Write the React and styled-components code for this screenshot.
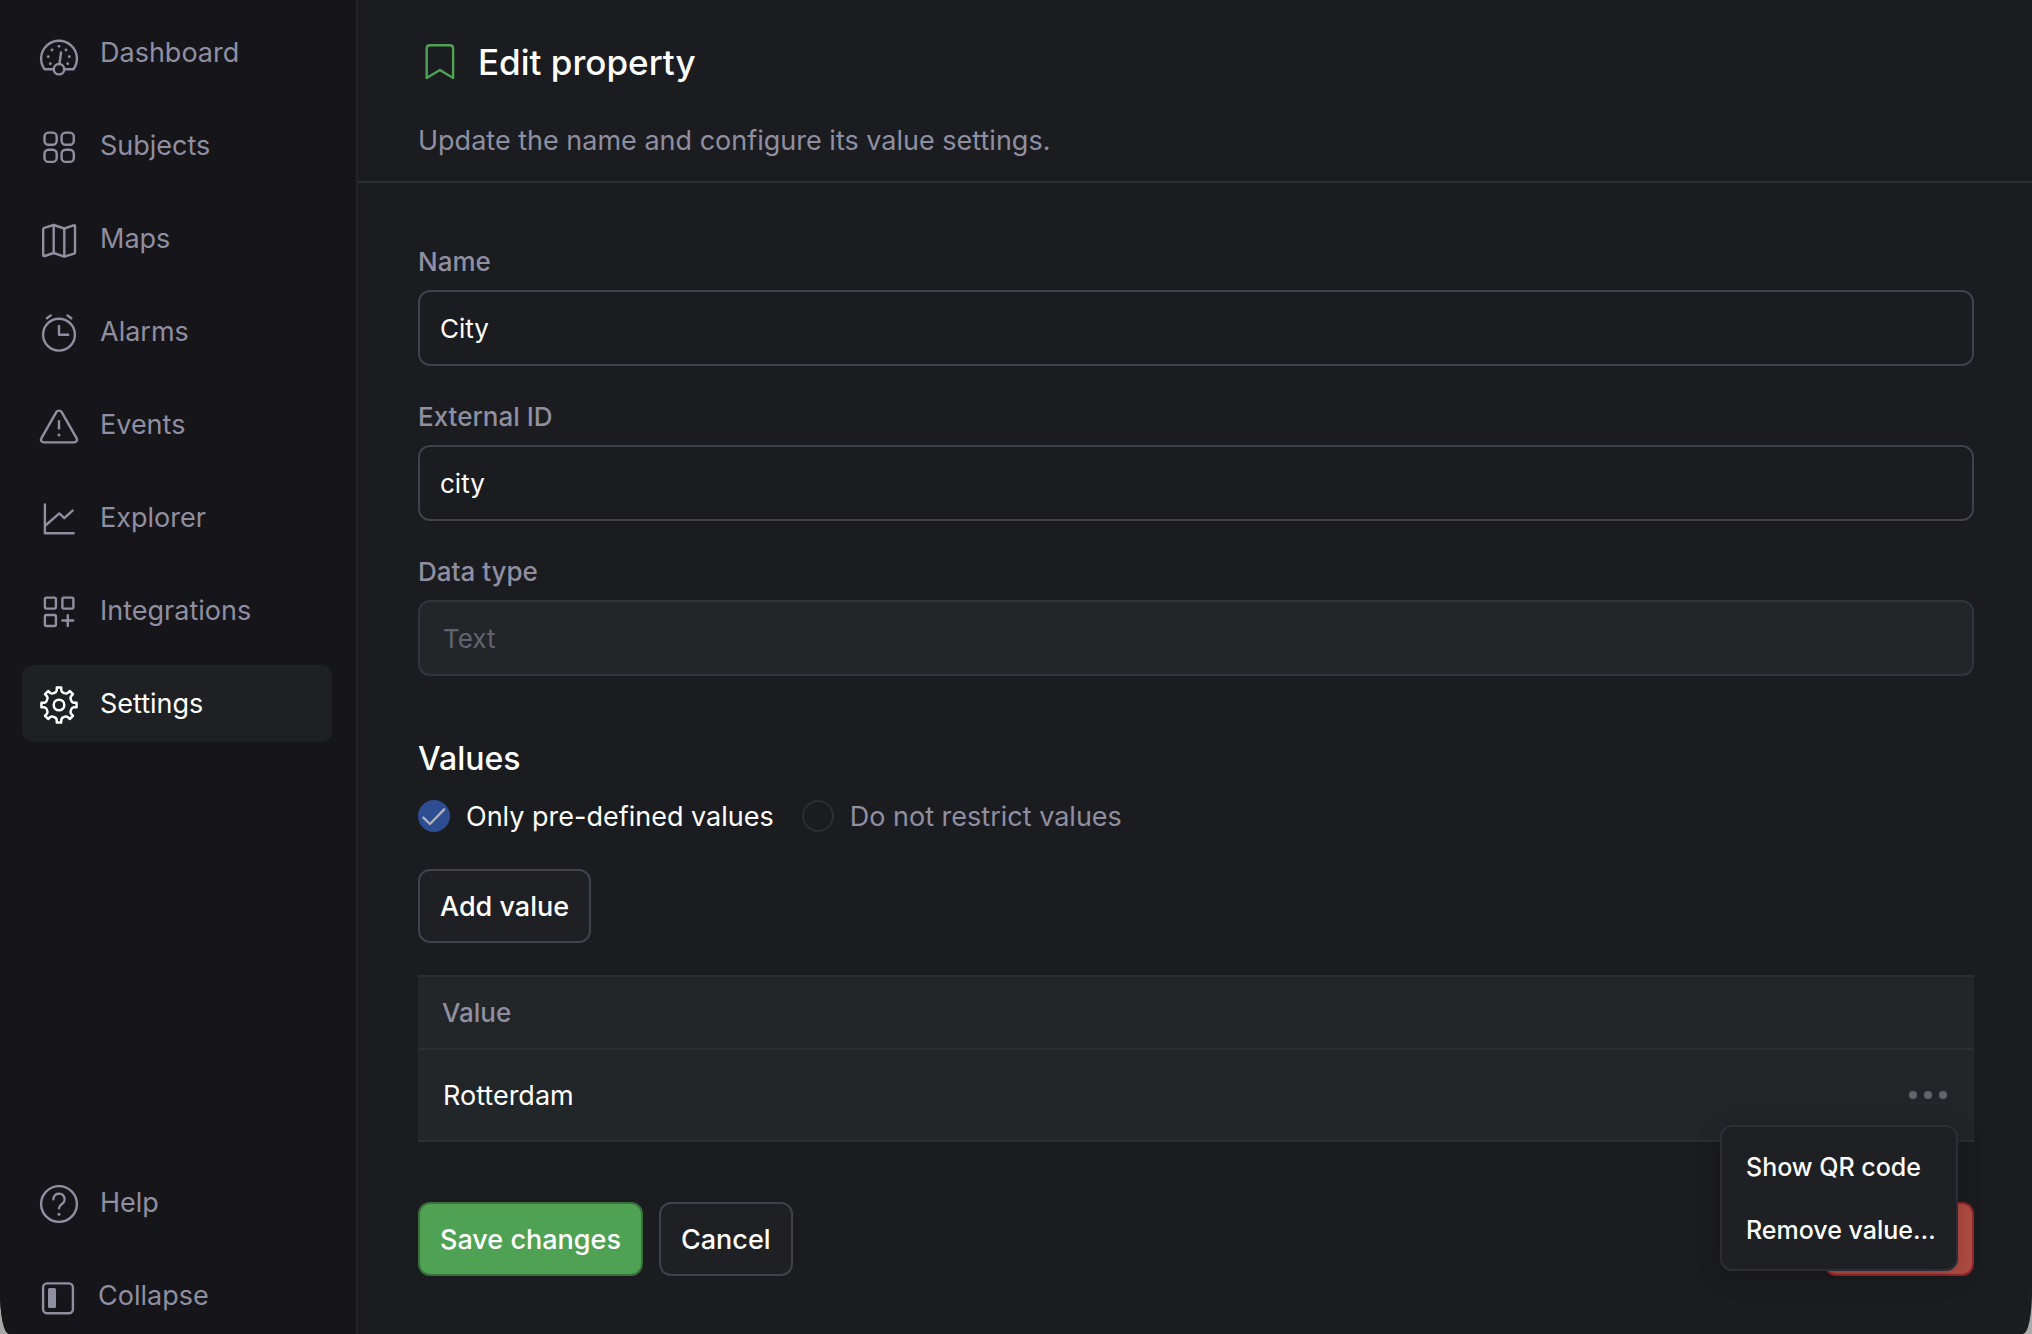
import React, { useState } from 'react';
import styled, { createGlobalStyle, css } from 'styled-components';

const color = {
  desktop: '#a9a9a9',
  sidebar: '#16151a',
  page: '#1b1c20',
  raised: '#1e2023',
  panel: '#222629',
  line: '#2b2e32',
  sidebarLine: '#212528',
  control: '#3e434b',
  controlMuted: '#2f363e',
  menuLine: '#2a2f37',
  text: '#ffffff',
  muted: '#8f8fa1',
  faint: '#62636e',
  green: '#4fa254',
  greenDark: '#38713d',
  red: '#b24d44',
  redDark: '#92272c',
  blue: '#2d4d93',
};

const GlobalStyle = createGlobalStyle`
  *, *::before, *::after { box-sizing: border-box; }
  body {
    margin: 0;
    background: ${color.desktop};
    font-family: Inter, "Liberation Sans", sans-serif;
    font-size: 27px;
    color: ${color.text};
    -webkit-font-smoothing: antialiased;
  }
  button, input, select { font: inherit; color: inherit; margin: 0; }
`;

const Window = styled.div`
  display: flex;
  min-height: 100vh;
  overflow: hidden;
  background: ${color.page};
  border-radius: 0 0 9px 9px / 0 0 42px 42px;
`;

const Sidebar = styled.nav`
  display: flex;
  flex-direction: column;
  justify-content: space-between;
  flex: none;
  width: 358px;
  padding: 14px 24px 0 22px;
  background: ${color.sidebar};
  border-right: 2px solid ${color.sidebarLine};
`;

const NavList = styled.ul`
  display: flex;
  flex-direction: column;
  gap: 16px;
  margin: 0;
  padding: 0;
  list-style: none;
`;

const navItem = css`
  display: flex;
  align-items: center;
  gap: 22px;
  width: 100%;
  height: 77px;
  padding: 0 18px;
  border: 0;
  border-radius: 11px;
  background: ${(p) => (p.$active ? color.raised : 'transparent')};
  color: ${(p) => (p.$active ? color.text : color.muted)};
  text-decoration: none;
  line-height: 32px;
  cursor: pointer;
`;

const NavLink = styled.a`${navItem}`;
const NavButton = styled.button`${navItem}`;

const Glyph = styled.svg`
  flex: none;
  overflow: visible;
  fill: none;
  stroke: currentColor;
  stroke-width: 2.4;
  stroke-linecap: round;
  stroke-linejoin: round;
`;

const Content = styled.main`
  flex: 1;
  min-width: 0;
`;

const PageHeader = styled.header`
  padding: 40px 58px 22px 60px;
  border-bottom: 2px solid ${color.line};
`;

const TitleRow = styled.div`
  display: flex;
  align-items: center;
  gap: 16px;
  margin-bottom: 39px;
`;

const TitleIcon = styled(Glyph)`
  color: ${color.green};
`;

const Title = styled.h1`
  margin: 0;
  font-size: 35px;
  font-weight: 500;
  line-height: 42px;
`;

const Subtitle = styled.p`
  margin: 0;
  line-height: 36px;
  color: ${color.muted};
`;

const Form = styled.form`
  display: flex;
  flex-direction: column;
  padding: 63px 58px 58px 60px;
`;

const Fields = styled.div`
  display: flex;
  flex-direction: column;
  gap: 35px;
`;

const Field = styled.div`
  display: flex;
  flex-direction: column;
  gap: 12px;
`;

const Label = styled.label`
  font-size: 26px;
  font-weight: 500;
  line-height: 32px;
  color: ${color.muted};
`;

const control = css`
  width: 100%;
  height: 76px;
  border-radius: 12px;
  font-size: 26px;
  outline: none;
`;

const TextInput = styled.input`
  ${control}
  padding: 0 20px;
  border: 2px solid ${color.control};
  background: transparent;
`;

const Select = styled.select`
  ${control}
  appearance: none;
  padding: 0 23px;
  border: 2px solid ${color.controlMuted};
  background: ${color.panel};
  color: ${color.faint};
  opacity: 1;
`;

const ValueModes = styled.fieldset`
  min-width: 0;
  margin: 63px 0 36px;
  padding: 0;
  border: 0;
`;

const SectionTitle = styled.legend`
  padding: 0;
  margin-bottom: 21px;
  font-size: 32px;
  font-weight: 500;
  line-height: 40px;
`;

const RadioRow = styled.div`
  display: flex;
  gap: 28px;
`;

const RadioOption = styled.label`
  display: grid;
  grid-template-columns: 32px auto;
  align-items: start;
  column-gap: 16px;
  line-height: 33px;
  color: ${(p) => (p.$selected ? color.text : color.muted)};
  cursor: pointer;
`;

const Radio = styled.input`
  grid-area: 1 / 1;
  appearance: none;
  width: 32px;
  height: 32px;
  border: 2px solid ${color.line};
  border-radius: 50%;

  &:checked {
    border-color: ${color.blue};
    background: ${color.blue};
  }
`;

const CheckMark = styled(Glyph)`
  grid-area: 1 / 1;
  color: #aeb2b6;
  pointer-events: none;
`;

const tones = {
  plain: [color.raised, color.control],
  primary: [color.green, color.greenDark],
  danger: [color.red, color.redDark],
};

const Button = styled.button`
  height: 74px;
  min-width: ${(p) => (p.$tone === 'danger' ? '150px' : '0')};
  padding: 0 20px;
  border: 2px solid ${(p) => tones[p.$tone || 'plain'][1]};
  border-radius: 12px;
  background: ${(p) => tones[p.$tone || 'plain'][0]};
  font-weight: 500;
  cursor: pointer;
`;

const Toolbar = styled.div`
  display: flex;
  margin-bottom: 32px;
`;

const Table = styled.table`
  width: 100%;
  border-spacing: 0;
  background: ${color.panel};
`;

const HeadCell = styled.th`
  height: 75px;
  padding: 0 24px;
  border: solid ${color.line};
  border-width: 2px 0;
  font-size: 26px;
  font-weight: 500;
  text-align: left;
  color: ${color.muted};
`;

const Cell = styled.td`
  height: 92px;
  padding: 0 25px;
  border-bottom: 2px solid ${color.line};
`;

const RowActions = styled.div`
  position: relative;
  width: 42px;
  margin-left: auto;
`;

const MoreButton = styled.button`
  display: flex;
  align-items: center;
  justify-content: center;
  width: 42px;
  height: 32px;
  padding: 0;
  border: 0;
  background: transparent;
  color: ${color.faint};
  cursor: pointer;
`;

const Menu = styled.div`
  position: absolute;
  z-index: 1;
  top: calc(100% + 14px);
  right: -9px;
  display: flex;
  flex-direction: column;
  width: 238px;
  padding: 8px 0;
  border: 2px solid ${color.menuLine};
  border-radius: 12px;
  background: ${color.raised};
  box-shadow: 0 4px 24px rgba(0, 0, 0, 0.24);
`;

const MenuItem = styled.button`
  height: 63px;
  padding: 0 0 0 24px;
  border: 0;
  background: transparent;
  font-size: 25px;
  font-weight: 500;
  text-align: left;
  white-space: nowrap;
  cursor: pointer;
`;

const FormActions = styled.div`
  display: flex;
  gap: 16px;
  margin-top: 60px;
`;

const Spacer = styled.span`
  flex: 1;
`;

function Icon({ width = 38, children }) {
  return (
    <Glyph width={width} height="38" viewBox={`0 -1 ${width} 38`} aria-hidden="true">
      {children}
    </Glyph>
  );
}

const gaugeDots = [
  [19, 11.3], [12, 15], [26, 15], [8.3, 21.7], [29.3, 21.7], [10.3, 28.7], [27.7, 28.7],
];

function gearPath(cx, cy) {
  const at = (deg, r) => {
    const a = (deg * Math.PI) / 180;
    return `${(cx + r * Math.sin(a)).toFixed(2)} ${(cy - r * Math.cos(a)).toFixed(2)}`;
  };
  let d = '';
  for (let k = 0; k < 8; k += 1) {
    const a = k * 45;
    d += `${k ? 'L' : 'M'}${at(a - 9, 14.8)}L${at(a - 7, 17.7)}L${at(a + 7, 17.7)}L${at(a + 9, 14.8)}`;
    d += `Q${at(a + 12, 13)} ${at(a + 22.5, 13)}Q${at(a + 33, 13)} ${at(a + 36, 14.8)}`;
  }
  return `${d}Z`;
}

const icons = {
  dashboard: (
    <Icon>
      <path d="M12.6 34.3H4.6A17.9 17.9 0 1 1 33.4 34.3H25.4" />
      <circle cx="19" cy="34.2" r="5.2" />
      <path d="M21 17.5L19.5 28.8" />
      {gaugeDots.map(([x, y]) => (
        <circle key={`${x}-${y}`} cx={x} cy={y} r="1.4" fill="currentColor" stroke="none" />
      ))}
    </Icon>
  ),
  subjects: (
    <Icon>
      <rect x="4.5" y="4.6" width="12.2" height="12.2" rx="4" />
      <rect x="21.6" y="4.6" width="12.2" height="12.2" rx="4" />
      <rect x="4.5" y="21.7" width="12.2" height="12.2" rx="4" />
      <rect x="21.6" y="21.7" width="12.2" height="12.2" rx="4" />
    </Icon>
  ),
  maps: (
    <Icon>
      <path d="M3.2 8.2Q3.2 7.2 4.2 6.9L13.7 4L24.3 7.5L33.6 4.4Q35 4 35 5.2V31.4Q35 32.3 34 32.6L24.3 35.6L13.7 32L4.6 35Q3.2 35.4 3.2 34.2Z" />
      <path d="M13.7 4V32M24.3 7.5V35.6" />
    </Icon>
  ),
  alarms: (
    <Icon>
      <circle cx="19" cy="20.7" r="15.9" />
      <path d="M19 12V20.7H28.2M6.9 4.3L10.8 1.4M27.4 1.4L31.3 4.3" />
    </Icon>
  ),
  events: (
    <Icon>
      <path d="M16.3 5.2C17.5 3.1 20.5 3.1 21.7 5.2L36.4 30.8C37.8 33.2 36.5 35.4 34 35.4H4C1.5 35.4 .2 33.2 1.6 30.8Z" />
      <path d="M19 14.2V21.4" />
      <circle cx="19" cy="28" r="1.5" fill="currentColor" stroke="none" />
    </Icon>
  ),
  explorer: (
    <Icon>
      <path d="M4.9 4.5V33.2H33.6M4.9 26L19.3 13.4L24.3 18.2L32.6 10.6" />
    </Icon>
  ),
  integrations: (
    <Icon>
      <rect x="4.9" y="4.6" width="11" height="11" rx="1.5" />
      <rect x="22.4" y="4.6" width="11" height="11" rx="1.5" />
      <rect x="4.9" y="22" width="11" height="11" rx="1.5" />
      <path d="M27.8 22.1V32.9M22.4 27.5H33.2" />
    </Icon>
  ),
  settings: (
    <Icon>
      <path d={gearPath(19, 19)} strokeWidth="2.5" />
      <circle cx="19" cy="19" r="5.3" strokeWidth="2.5" />
    </Icon>
  ),
  help: (
    <Icon>
      <circle cx="19" cy="19" r="17.9" />
      <path d="M13.4 14.4A5.6 5.6 0 1 1 21.6 19.2C20 20.2 19 21.2 19 23.2" />
      <circle cx="19" cy="29.3" r="1.5" fill="currentColor" stroke="none" />
    </Icon>
  ),
  collapse: (
    <Icon width={36}>
      <rect x="3.1" y="5.4" width="29.8" height="29.8" rx="4" />
      <rect x="8" y="10" width="8" height="20" rx="1.5" fill="currentColor" stroke="none" />
    </Icon>
  ),
};

const sections = [
  ['dashboard', 'Dashboard'],
  ['subjects', 'Subjects'],
  ['maps', 'Maps'],
  ['alarms', 'Alarms'],
  ['events', 'Events'],
  ['explorer', 'Explorer'],
  ['integrations', 'Integrations'],
  ['settings', 'Settings'],
];

const modes = [
  ['predefined', 'Only pre-defined values'],
  ['free', 'Do not restrict values'],
];

function SideNav({ current }) {
  return (
    <Sidebar aria-label="Main">
      <NavList>
        {sections.map(([id, label]) => (
          <li key={id}>
            <NavLink
              href={`#${id}`}
              $active={id === current}
              aria-current={id === current ? 'page' : undefined}
            >
              {icons[id]}
              {label}
            </NavLink>
          </li>
        ))}
      </NavList>
      <NavList>
        <li>
          <NavLink href="#help">
            {icons.help}
            Help
          </NavLink>
        </li>
        <li>
          <NavButton type="button">
            {icons.collapse}
            Collapse
          </NavButton>
        </li>
      </NavList>
    </Sidebar>
  );
}

function ValueRow({ value }) {
  const [open, setOpen] = useState(true);
  return (
    <tr>
      <Cell>{value}</Cell>
      <Cell>
        <RowActions>
          <MoreButton
            type="button"
            aria-label={`Actions for ${value}`}
            aria-haspopup="menu"
            aria-expanded={open}
            onClick={() => setOpen(!open)}
          >
            <svg width="38" height="8" viewBox="0 0 38 8" fill="currentColor" aria-hidden="true">
              <circle cx="4" cy="4" r="4" />
              <circle cx="19" cy="4" r="4" />
              <circle cx="34" cy="4" r="4" />
            </svg>
          </MoreButton>
          {open && (
            <Menu role="menu">
              <MenuItem type="button" role="menuitem">Show QR code</MenuItem>
              <MenuItem type="button" role="menuitem">Remove value…</MenuItem>
            </Menu>
          )}
        </RowActions>
      </Cell>
    </tr>
  );
}

export default function App() {
  const [name, setName] = useState('City');
  const [externalId, setExternalId] = useState('city');
  const [mode, setMode] = useState('predefined');

  return (
    <>
      <GlobalStyle />
      <Window>
        <SideNav current="settings" />
        <Content>
          <PageHeader>
            <TitleRow>
              <TitleIcon width="44" height="44" viewBox="0 0 44 44" aria-hidden="true">
                <path d="M8.7 38V8.4Q8.7 5.2 11.9 5.2H31.9Q35.1 5.2 35.1 8.4V38L21.9 30Z" />
              </TitleIcon>
              <Title>Edit property</Title>
            </TitleRow>
            <Subtitle>Update the name and configure its value settings.</Subtitle>
          </PageHeader>
          <Form onSubmit={(e) => e.preventDefault()}>
            <Fields>
              <Field>
                <Label htmlFor="name">Name</Label>
                <TextInput id="name" value={name} onChange={(e) => setName(e.target.value)} />
              </Field>
              <Field>
                <Label htmlFor="external-id">External ID</Label>
                <TextInput
                  id="external-id"
                  value={externalId}
                  onChange={(e) => setExternalId(e.target.value)}
                />
              </Field>
              <Field>
                <Label htmlFor="data-type">Data type</Label>
                <Select id="data-type" disabled>
                  <option>Text</option>
                </Select>
              </Field>
            </Fields>
            <ValueModes>
              <SectionTitle>Values</SectionTitle>
              <RadioRow>
                {modes.map(([id, label]) => (
                  <RadioOption key={id} $selected={mode === id}>
                    <Radio
                      type="radio"
                      name="mode"
                      value={id}
                      checked={mode === id}
                      onChange={() => setMode(id)}
                    />
                    {mode === id && (
                      <CheckMark width="32" height="32" viewBox="0 0 32 32" aria-hidden="true">
                        <path d="M5.4 17.6L12 24L26.2 9.4" />
                      </CheckMark>
                    )}
                    <span>{label}</span>
                  </RadioOption>
                ))}
              </RadioRow>
            </ValueModes>
            <Toolbar>
              <Button type="button">Add value</Button>
            </Toolbar>
            <Table>
              <thead>
                <tr>
                  <HeadCell scope="col" colSpan={2}>Value</HeadCell>
                </tr>
              </thead>
              <tbody>
                <ValueRow value="Rotterdam" />
              </tbody>
            </Table>
            <FormActions>
              <Button type="submit" $tone="primary">Save changes</Button>
              <Button type="button">Cancel</Button>
              <Spacer />
              <Button type="button" $tone="danger" aria-label="Delete" />
            </FormActions>
          </Form>
        </Content>
      </Window>
    </>
  );
}
